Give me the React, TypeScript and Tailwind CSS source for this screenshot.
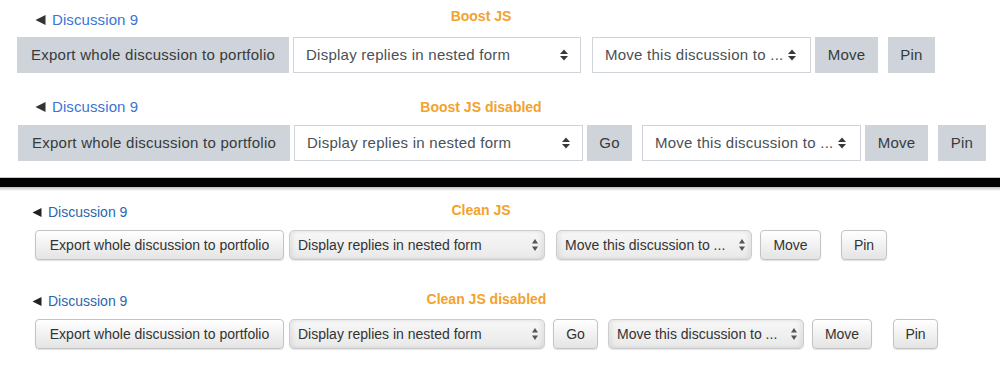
import type { ReactNode } from 'react';

const boostFont = { fontFamily: '"Liberation Sans", Arial, sans-serif' };

function BackTriangle({ className }: { className?: string }) {
  return (
    <svg viewBox="0 0 10 10" className={className}>
      <polygon points="10,0 10,10 0,5" fill="currentColor" />
    </svg>
  );
}

function Header({ label, clean, labelClass }: { label: string; clean?: boolean; labelClass?: string }) {
  return (
    <div className="grid h-[22px] w-[962px] items-center">
      <div className={`col-start-1 row-start-1 flex items-center ${clean ? 'pl-[32px]' : 'pl-[35px]'}`}>
        <BackTriangle className={clean ? 'w-[10px] h-[9px] text-[#222]' : 'w-[11px] h-[10px] text-[#333]'} />
        <a
          className={
            clean
              ? 'ml-[6px] text-[14px] text-[#2a67ad] leading-[20px]'
              : 'ml-[6px] text-[15px] tracking-[0.1px] text-[#3a74d6] leading-[20px]'
          }
        >
          Discussion 9
        </a>
      </div>
      <div className={`col-start-1 row-start-1 text-center text-[14px] font-bold text-[#f3a22c] leading-[16px] ${labelClass ?? ''}`}>
        {label}
      </div>
    </div>
  );
}

function BoostButton({ children, w, ml }: { children: ReactNode; w: string; ml?: string }) {
  return (
    <button className={`${w} ${ml ?? ''} h-[36px] bg-[#ced4da] text-[#373a3c] text-[15px] tracking-[0.25px] flex items-center justify-center shrink-0`}>
      {children}
    </button>
  );
}

function BoostArrows() {
  return (
    <svg viewBox="0 0 8 12" className="w-[8px] h-[12px] text-[#373a3c]">
      <polygon points="0,5 4,0.5 8,5" fill="currentColor" />
      <polygon points="0,7 8,7 4,11.5" fill="currentColor" />
    </svg>
  );
}

function BoostSelect({ text, w, ml, pr }: { text: string; w: string; ml?: string; pr?: string }) {
  return (
    <div className={`${w} ${ml ?? ''} ${pr ?? 'pr-[12px]'} h-[36px] border border-[#ced4da] bg-white pl-[12px] flex items-center justify-between text-[#495057] text-[15px] tracking-[0.25px] shrink-0`}>
      <span>{text}</span>
      <BoostArrows />
    </div>
  );
}

function CleanButton({ children, w, ml }: { children: ReactNode; w: string; ml?: string }) {
  return (
    <button
      className={`${w} ${ml ?? ''} h-[30px] rounded-[4px] border border-[#c3c3c3] bg-gradient-to-b from-[#ffffff] to-[#e4e4e4] shadow-[0_1px_1px_rgba(0,0,0,0.12)] text-[#333] text-[14px] flex items-center justify-center shrink-0`}
    >
      {children}
    </button>
  );
}

function CleanArrows() {
  return (
    <svg viewBox="0 0 6 14" className="w-[6px] h-[14px] text-[#555]">
      <polygon points="0,5.5 3,1 6,5.5" fill="currentColor" />
      <polygon points="0,8.5 6,8.5 3,13" fill="currentColor" />
    </svg>
  );
}

function CleanSelect({ text, w, ml }: { text: string; w: string; ml?: string }) {
  return (
    <div
      className={`${w} ${ml ?? ''} h-[30px] rounded-[5px] border border-[#cdcdcd] bg-gradient-to-b from-[#f7f7f7] to-[#e9e9e9] shadow-[inset_3px_0_4px_rgba(0,0,0,0.06),inset_-3px_0_4px_rgba(0,0,0,0.06),0_1px_1px_rgba(0,0,0,0.1)] pl-[8px] pr-[6px] flex items-center justify-between text-[#333] text-[14px] shrink-0`}
    >
      <span>{text}</span>
      <CleanArrows />
    </div>
  );
}

export default function App() {
  return (
    <div className="w-[1000px] h-[371px] bg-white overflow-hidden" style={boostFont}>
      {/* Boost JS */}
      <div className="pt-[8px]">
        <Header label="Boost JS" labelClass="mb-[8px]" />
        <div className="mt-[7px] flex pl-[17px]">
          <BoostButton w="w-[272px]">Export whole discussion to portfolio</BoostButton>
          <BoostSelect w="w-[288px]" ml="ml-[4px]" text="Display replies in nested form" />
          <BoostSelect w="w-[219px]" ml="ml-[11px]" pr="pr-[14px]" text="Move this discussion to ..." />
          <BoostButton w="w-[63px]" ml="ml-[4px]">Move</BoostButton>
          <BoostButton w="w-[47px]" ml="ml-[10px]">Pin</BoostButton>
        </div>
      </div>

      {/* Boost JS disabled */}
      <div className="mt-[23px]">
        <Header label="Boost JS disabled" labelClass="mb-[1px]" />
        <div className="mt-[7px] flex pl-[18px]">
          <BoostButton w="w-[272px]">Export whole discussion to portfolio</BoostButton>
          <BoostSelect w="w-[289px]" ml="ml-[4px]" text="Display replies in nested form" />
          <BoostButton w="w-[45px]" ml="ml-[4px]">Go</BoostButton>
          <BoostSelect w="w-[219px]" ml="ml-[10px]" pr="pr-[14px]" text="Move this discussion to ..." />
          <BoostButton w="w-[63px]" ml="ml-[4px]">Move</BoostButton>
          <BoostButton w="w-[48px]" ml="ml-[10px]">Pin</BoostButton>
        </div>
      </div>

      {/* separator */}
      <div className="mt-[16px]">
        <div className="h-[1px] bg-[#c8c8c8]" />
        <div className="h-[9px] bg-black" />
        <div className="h-[4px] bg-gradient-to-b from-[#bdbdbd] to-white" />
      </div>

      {/* Clean JS */}
      <div className="mt-[10px]">
        <Header clean label="Clean JS" labelClass="mb-[5px]" />
        <div className="mt-[7px] flex pl-[35px]">
          <CleanButton w="w-[249px]">Export whole discussion to portfolio</CleanButton>
          <CleanSelect w="w-[256px]" ml="ml-[5px]" text="Display replies in nested form" />
          <CleanSelect w="w-[196px]" ml="ml-[11px]" text="Move this discussion to ..." />
          <CleanButton w="w-[61px]" ml="ml-[8px]">Move</CleanButton>
          <CleanButton w="w-[46px]" ml="ml-[20px]">Pin</CleanButton>
        </div>
      </div>

      {/* Clean JS disabled */}
      <div className="mt-[30px]">
        <Header clean label="Clean JS disabled" labelClass="mb-[5px] pl-[11px]" />
        <div className="mt-[7px] flex pl-[35px]">
          <CleanButton w="w-[249px]">Export whole discussion to portfolio</CleanButton>
          <CleanSelect w="w-[256px]" ml="ml-[5px]" text="Display replies in nested form" />
          <CleanButton w="w-[45px]" ml="ml-[8px]">Go</CleanButton>
          <CleanSelect w="w-[196px]" ml="ml-[10px]" text="Move this discussion to ..." />
          <CleanButton w="w-[60px]" ml="ml-[8px]">Move</CleanButton>
          <CleanButton w="w-[45px]" ml="ml-[21px]">Pin</CleanButton>
        </div>
      </div>
    </div>
  );
}
